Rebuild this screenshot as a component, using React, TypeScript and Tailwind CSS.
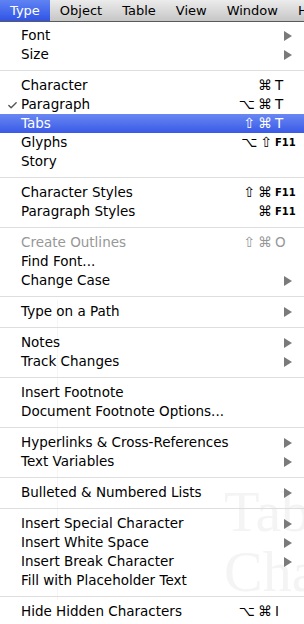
import { Check } from "lucide-react";

type Item = {
  label: string;
  mods?: string;
  keyName?: string;
  sub?: boolean;
  checked?: boolean;
  active?: boolean;
  disabled?: boolean;
};

const groups: Item[][] = [
  [
    { label: "Font", sub: true },
    { label: "Size", sub: true },
  ],
  [
    { label: "Character", mods: "⌘", keyName: "T" },
    { label: "Paragraph", mods: "⌥⌘", keyName: "T", checked: true },
    { label: "Tabs", mods: "⇧⌘", keyName: "T", active: true },
    { label: "Glyphs", mods: "⌥⇧", keyName: "F11" },
    { label: "Story" },
  ],
  [
    { label: "Character Styles", mods: "⇧⌘", keyName: "F11" },
    { label: "Paragraph Styles", mods: "⌘", keyName: "F11" },
  ],
  [
    { label: "Create Outlines", mods: "⇧⌘", keyName: "O", disabled: true },
    { label: "Find Font..." },
    { label: "Change Case", sub: true },
  ],
  [{ label: "Type on a Path", sub: true }],
  [
    { label: "Notes", sub: true },
    { label: "Track Changes", sub: true },
  ],
  [{ label: "Insert Footnote" }, { label: "Document Footnote Options..." }],
  [
    { label: "Hyperlinks & Cross-References", sub: true },
    { label: "Text Variables", sub: true },
  ],
  [{ label: "Bulleted & Numbered Lists", sub: true }],
  [
    { label: "Insert Special Character", sub: true },
    { label: "Insert White Space", sub: true },
    { label: "Insert Break Character", sub: true },
    { label: "Fill with Placeholder Text" },
  ],
  [{ label: "Hide Hidden Characters", mods: "⌥⌘", keyName: "I" }],
];

const menus = ["Type", "Object", "Table", "View", "Window", "H"];

const Row = ({ item }: { item: Item }) => {
  const color = item.active ? "text-white" : item.disabled ? "text-[#979797]" : "text-black";
  return (
    <div
      className={`relative flex h-[19px] items-center leading-[19px] ${color} ${
        item.active ? "bg-gradient-to-b from-[#6a87f2] to-[#3a59e8]" : ""
      }`}
    >
      {item.checked && (
        <Check className="absolute left-[7px] top-[5px] h-[11px] w-[11px] text-[#555]" strokeWidth={3} />
      )}
      <span className="flex-1 pl-[21px] whitespace-nowrap">{item.label}</span>
      {item.keyName && (
        <span className="flex items-center">
          <span className="flex gap-[3px] pr-[3px] text-[14px]">
            {Array.from(item.mods ?? "").map((m, i) => (
              <span key={i}>{m}</span>
            ))}
          </span>
          <span
            className={`w-[29px] ${item.keyName === "F11" ? "text-[10px] font-bold" : ""}`}
          >
            {item.keyName}
          </span>
        </span>
      )}
      {item.sub && (
        <svg className="mr-[12px] h-[10px] w-[8px]" viewBox="0 0 8 10">
          <path d="M0 0 L8 5 L0 10 Z" fill={item.active ? "#fff" : "#7a7a7a"} />
        </svg>
      )}
    </div>
  );
};

export default function App() {
  return (
    <div className="relative h-[624px] w-[304px] overflow-hidden bg-white text-[13.5px] font-['DejaVu_Sans',sans-serif]">
      {/* faint document behind the translucent menu */}
      <div className="pointer-events-none absolute left-[224px] top-[488px] font-['Liberation_Serif',serif] text-[58px] leading-[48px] text-[#f4f4f4]">
        Tabs
      </div>
      <div className="pointer-events-none absolute left-[224px] top-[548px] font-['Liberation_Serif',serif] text-[58px] leading-[48px] text-[#f4f4f4]">
        Cha
      </div>
      <div className="pointer-events-none absolute left-[57px] top-[300px] h-[300px] w-px bg-[#f5f5f5]" />

      <div className="relative flex h-[22px] items-center border-b border-[#5a5a5a] bg-gradient-to-b from-[#ececec] to-[#c6c6c6] text-[13px] leading-[21px]">
        {menus.map((m, i) => (
          <div
            key={m}
            className={`h-[21px] whitespace-nowrap px-[10px] ${
              i === 0 ? "bg-gradient-to-b from-[#6083f3] to-[#3152e6] text-white" : "text-black"
            }`}
          >
            {m}
          </div>
        ))}
      </div>

      <div className="relative pt-[4px]">
        {groups.map((g, gi) => (
          <div key={gi}>
            {gi > 0 && (
              <div className="flex h-[12px] items-center">
                <div className="h-px w-full bg-[#dedede]" />
              </div>
            )}
            {g.map((item) => (
              <Row key={item.label} item={item} />
            ))}
          </div>
        ))}
      </div>
    </div>
  );
}
